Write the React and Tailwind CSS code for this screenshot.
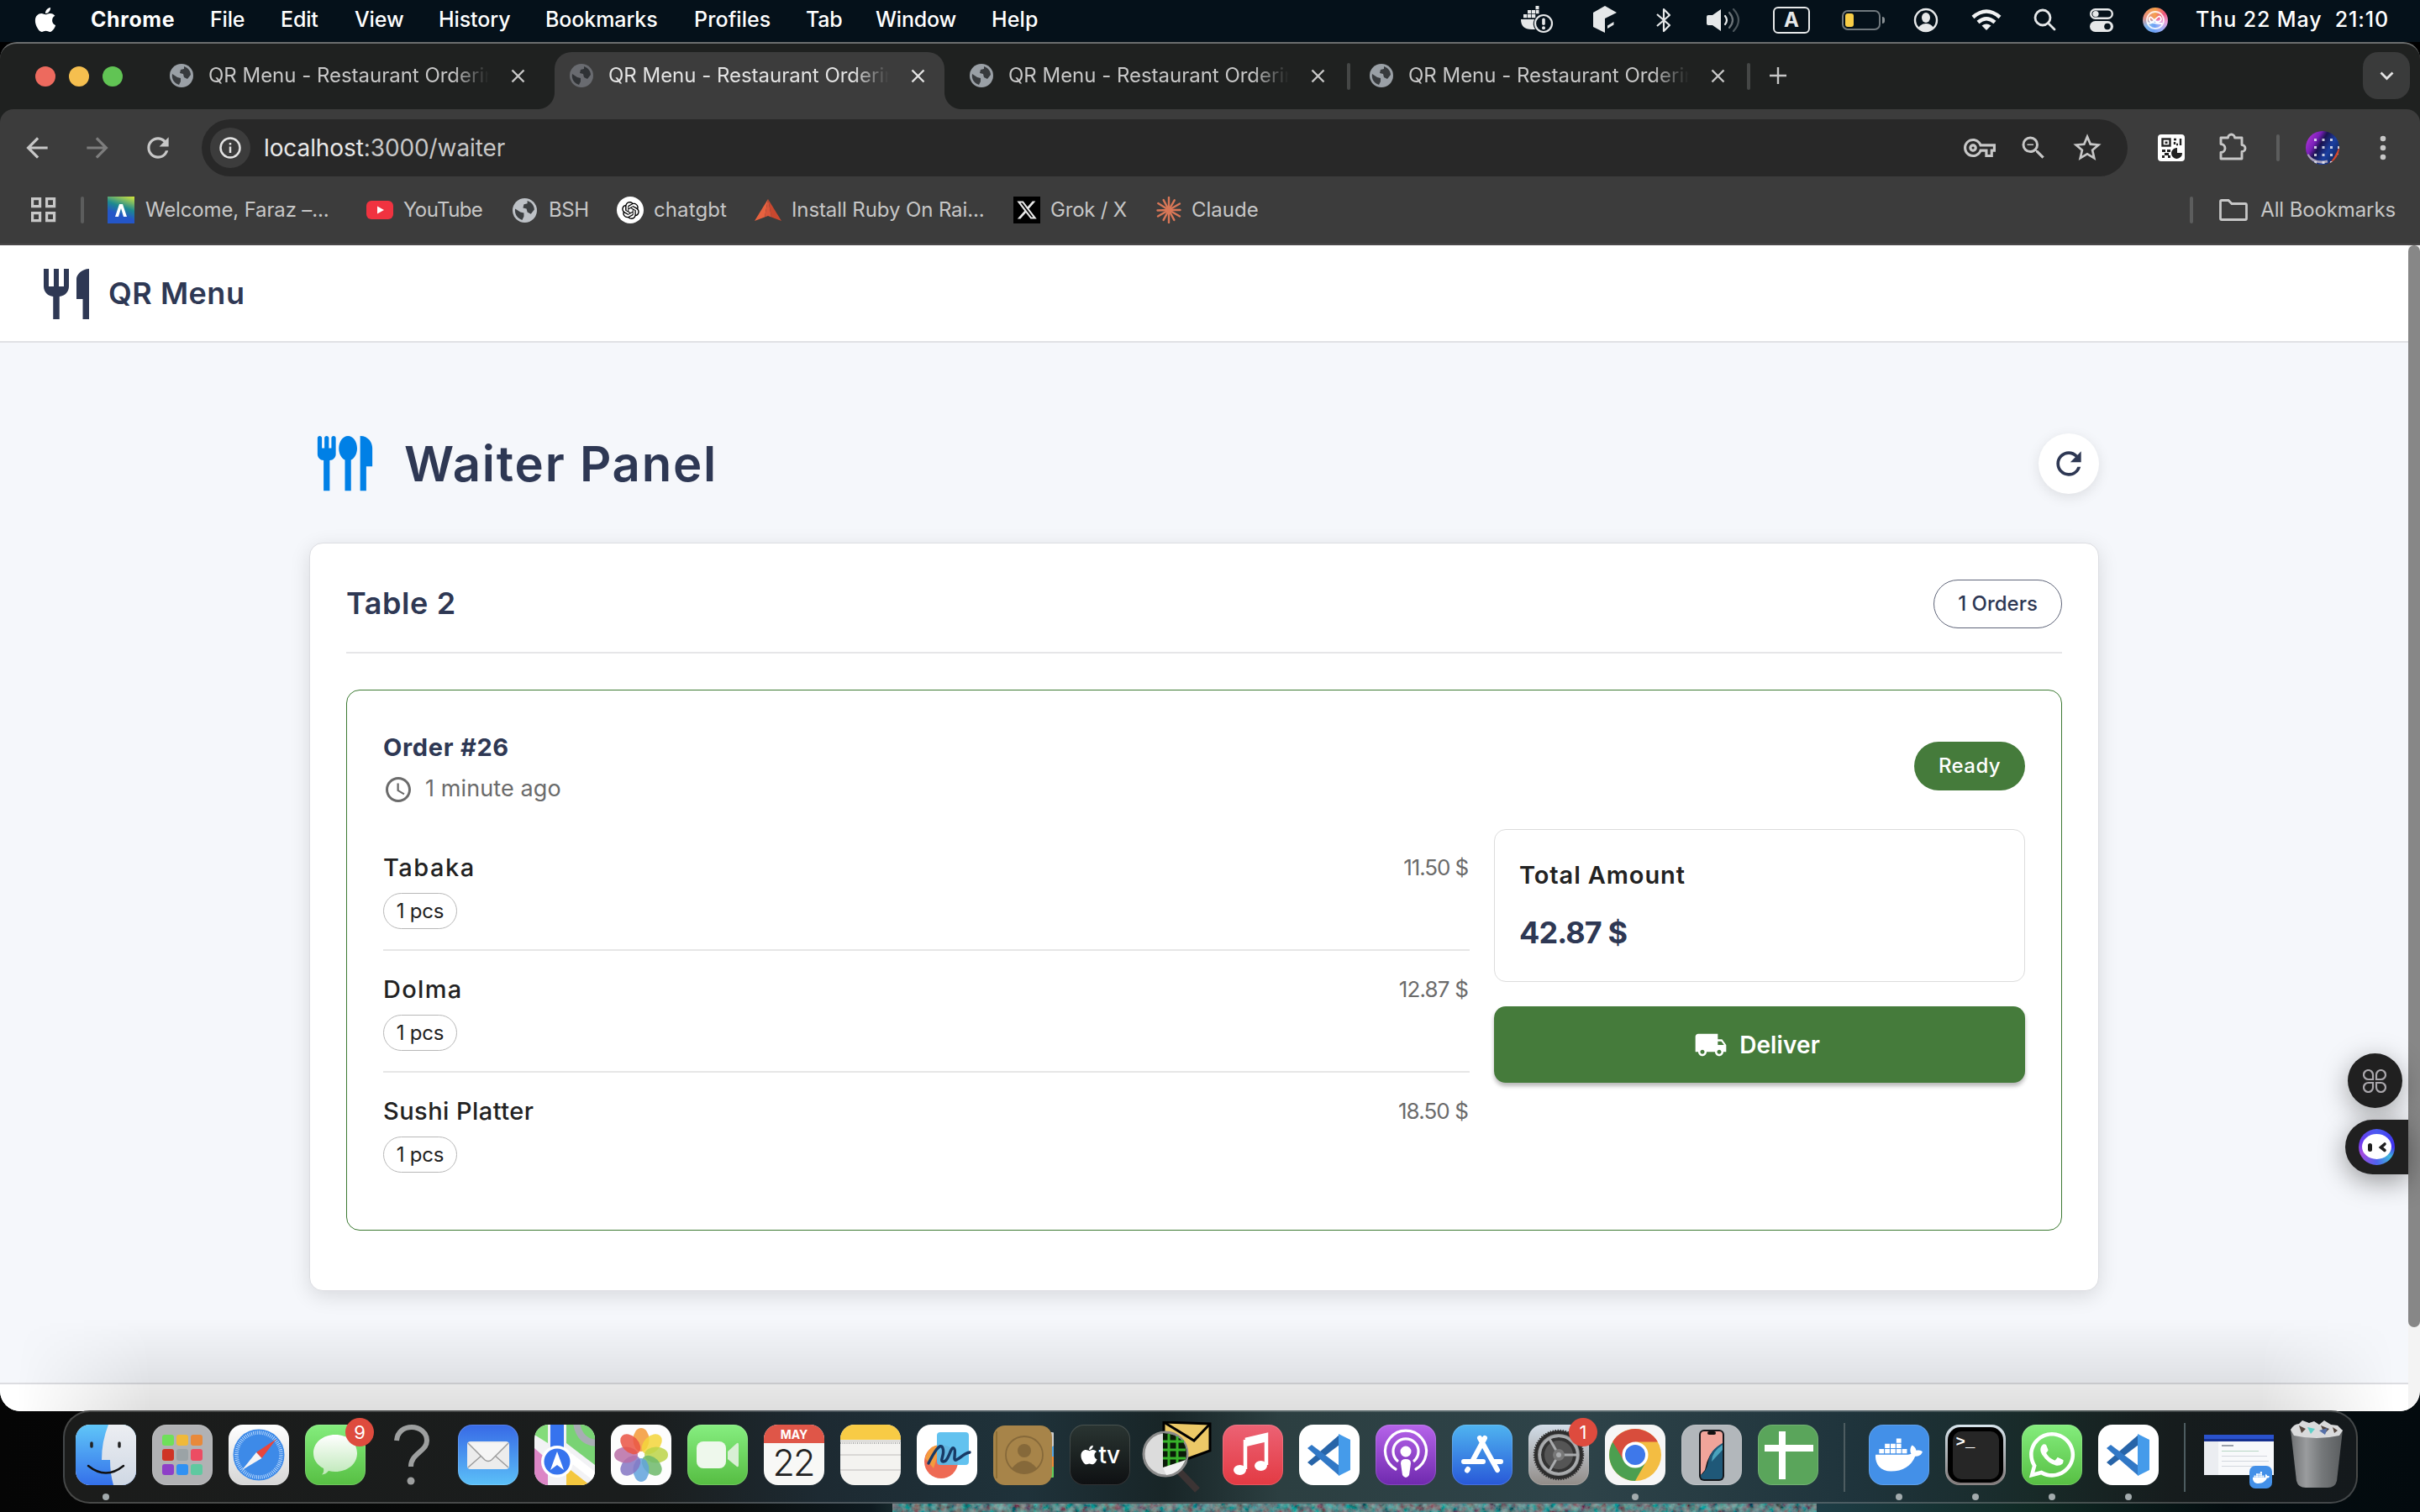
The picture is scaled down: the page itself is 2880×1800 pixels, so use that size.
import React from "react";
import { FaApple, FaDocker, FaWhatsapp } from "react-icons/fa";
import { FaXTwitter } from "react-icons/fa6";
import { RiOpenaiFill } from "react-icons/ri";
import {
  MdRestaurant, MdFlatware, MdRefresh, MdAccessTime, MdLocalShipping, MdArrowBack,
  MdArrowForward, MdStarBorder, MdOutlineVpnKey, MdZoomOut,
} from "react-icons/md";

/* ---------- macOS menu bar ---------- */

const MENUS = [
  ["Chrome", "w-[142px] font-bold tracking-[0.6px]"],
  ["File", "w-[84px] tracking-[-0.2px]"],
  ["Edit", "w-[88px] tracking-[-0.2px]"],
  ["View", "w-[100px] tracking-[-0.1px]"],
  ["History", "w-[127px] tracking-[-0.1px]"],
  ["Bookmarks", "w-[177px] tracking-[-0.1px]"],
  ["Profiles", "w-[133px] tracking-[0.1px]"],
  ["Tab", "w-[83px] tracking-[-0.2px]"],
  ["Window", "w-[138px] tracking-[-0.2px]"],
  ["Help", "w-[80px] tracking-[0.1px]"],
];

function DockerStatus() {
  return (
    <svg className="w-[40px] h-[34px]" viewBox="0 0 40 34" fill="#e6e8e9">
      <path d="M0 16h16a12 12 0 0 0 1 12H13C4 28 0 24 0 16zM3 10h4.300v4.300h-4.300zM8 10h4.300v4.300h-4.300zM13 10h4.300v4.300h-4.300zM8 5h4.300v4.300h-4.300zM13 5h4.300v4.300h-4.300zM18 5h3.500v4.300h-3.500zM17.500 0h4v4.300h-4z" />
      <circle cx="27" cy="21" r="10" fill="none" stroke="#e6e8e9" strokeWidth="2.200" />
      <rect x="25.200" y="14.500" width="3.600" height="8.500" rx="1.800" />
      <circle cx="27" cy="26.300" r="2" />
    </svg>
  );
}

function MenuBar() {
  return (
    <div className="h-[50px] bg-[#05111a] flex items-center pb-[3px] text-white text-[25px] font-medium">
      <FaApple className="w-[30px] h-[33px] ml-[39px] mr-[39px]" />
      {MENUS.map(([label, cls]) => (
        <div key={label} className={"whitespace-nowrap " + cls}>{label}</div>
      ))}
      <div className="ml-auto flex items-center w-[1070px]">
        <DockerStatus />
        <svg className="w-[28px] h-[33px] ml-[46px]" viewBox="0 0 28 33" fill="#e6e8e9">
          <path d="M0 8 14 0 28 8 14 15V32L0 25z" />
          <path d="M17 23.500 24.500 19v3.500L17 27z" />
        </svg>
        <svg className="w-[18px] h-[30px] ml-[47px]" viewBox="0 0 18 30" fill="none" stroke="#e6e8e9" strokeWidth="2.200" strokeLinejoin="round">
          <path d="M1 8 16 21 9 28V2L16 9 1 22" />
        </svg>
        <svg className="w-[40px] h-[28px] ml-[42px]" viewBox="0 0 40 28" fill="none" strokeWidth="2.200" strokeLinecap="round">
          <path d="M0 10q0-2 2-2h5L17 1V27L7 20H2q-2 0-2-2z" fill="#e6e8e9" />
          <path d="M22 9q4 5 0 10" stroke="#e6e8e9" />
          <path d="M27 5q8 9 0 18" stroke="#6d757a" />
          <path d="M32 1q12 13 0 26" stroke="#4b555b" />
        </svg>
        <div className="ml-[39px] w-[44px] h-[32px] rounded-[6px] border-2 border-[#e6e8e9] flex items-center justify-center font-bold text-[24px] text-[#e6e8e9] tracking-normal">A</div>
        <div className="ml-[38px] w-[46px] h-[24px] rounded-[7px] border-2 border-[#70787d] p-[2px]">
          <div className="w-[10px] h-full rounded-[3px] bg-[#f8cd46]" />
        </div>
        <div className="ml-[2px] w-[3px] h-[8px] rounded-r-full bg-[#8a9195]" />
        <svg className="w-[30px] h-[30px] ml-[34px]" viewBox="0 0 30 30">
          <circle cx="15" cy="15" r="13" fill="none" stroke="#e6e8e9" strokeWidth="2.400" />
          <ellipse cx="15" cy="12" rx="5" ry="6" fill="#e6e8e9" />
          <path d="M6 24q3-5 9-5t9 5q-9 8-18 0z" fill="#e6e8e9" />
        </svg>
        <svg className="w-[36px] h-[26px] ml-[39px]" viewBox="0 0 36 26" fill="none" stroke="#f0f1f2" strokeWidth="4.500">
          <path d="M2 9.500Q18-4.500 34 9.500" />
          <path d="M8 15.500Q18 7 28 15.500" />
          <path d="M18 25 12.500 19.500Q18 15.500 23.500 19.500z" fill="#f0f1f2" stroke="none" />
        </svg>
        <svg className="w-[27px] h-[27px] ml-[38px]" viewBox="0 0 27 27" fill="none" stroke="#e6e8e9" strokeWidth="2.800" strokeLinecap="round">
          <circle cx="11" cy="11" r="9" /><path d="M18 18 25 25" />
        </svg>
        <svg className="w-[28px] h-[28px] ml-[40px]" viewBox="0 0 28 28">
          <rect x="1.200" y="1.200" width="25.600" height="10.600" rx="5.300" fill="none" stroke="#e6e8e9" strokeWidth="2.400" />
          <circle cx="7" cy="6.500" r="3.600" fill="#e6e8e9" />
          <rect x="0" y="15" width="28" height="13" rx="6.500" fill="#e6e8e9" />
          <circle cx="21" cy="21.500" r="3.800" fill="#05111a" />
        </svg>
        <div className="ml-[35px] w-[30px] h-[30px] rounded-full bg-[conic-gradient(#f5a14a,#f0557f_15%,#e8a0d8_28%,#9fb0f8_40%,#6aa0f5_52%,#7fb6f0_65%,#e8907f_80%,#f5a14a)] flex items-center justify-center">
          <svg className="w-[24px] h-[24px]" viewBox="0 0 24 24" fill="none" stroke="#fff" strokeWidth="1.800">
            <circle cx="12" cy="12" r="10" opacity=".85" />
            <path d="M3 15C7 17 9 14 12 11S17 6 18.500 9 16 16 12 13 6 6 5 10 9 16 20 16" />
          </svg>
        </div>
        <div className="ml-[33px] whitespace-pre tracking-[0.9px] font-medium">Thu 22 May  21:10</div>
      </div>
    </div>
  );
}

/* ---------- Chrome ---------- */

function Globe({ className }) {
  return (
    <svg className={className} viewBox="0 0 28 28">
      <circle cx="14" cy="14" r="14" fill="currentColor" />
      <path d="M3 12l6 4 4 1v4l-2 4C5 23 2 18 3 12zM17 3c6 2 8 7 8 10l-4 5-4-2-1-4-4-1 1-4 4-1z" fill="#26282a" opacity=".85" />
    </svg>
  );
}

function CloseX() {
  return (
    <svg className="w-[17px] h-[17px] shrink-0" viewBox="0 0 17 17" stroke="currentColor" strokeWidth="2.400">
      <path d="M1.500 1.500 15.500 15.500M15.500 1.500 1.500 15.500" />
    </svg>
  );
}

function Tab({ active, divider }) {
  return (
    <div className={"relative w-[476px] h-[78px] flex items-center pl-[18px] " + (active ? "text-[#e3e3e3]" : "text-[#c7c7c7]")}>
      {active && (
        <div className="absolute left-0 top-[10px] w-[464px] h-[68px] rounded-t-[20px] bg-[#3c3c3c]">
          <div className="absolute left-[-20px] bottom-0 w-[20px] h-[20px] bg-[radial-gradient(circle_at_0_0,#1f2120_19.500px,#3c3c3c_20.500px)]" />
          <div className="absolute right-[-20px] bottom-0 w-[20px] h-[20px] bg-[radial-gradient(circle_at_100%_0,#1f2120_19.500px,#3c3c3c_20.500px)]" />
        </div>
      )}
      <Globe className={"relative w-[28px] h-[28px] shrink-0 mb-[2px] " + (active ? "text-[#696b70]" : "text-[#9aa0a6]")} />
      <div className="relative ml-[18px] mb-[2px] w-[334px] overflow-hidden whitespace-nowrap text-[24px] leading-[32px] tracking-[-0.02px] [mask-image:linear-gradient(to_right,#000_87%,transparent)]">
        QR Menu - Restaurant Ordering
      </div>
      <div className={"relative ml-[26px] mb-[2px] " + (active ? "text-[#e3e3e3]" : "text-[#c7c7c7]")}><CloseX /></div>
      {divider && <div className="ml-[26px] w-[4px] h-[32px] rounded-full bg-[#454746]" />}
    </div>
  );
}

function ClaudeMark() {
  return (
    <svg className="w-[32px] h-[32px]" viewBox="-16 -16 32 32" stroke="#d97757" strokeWidth="2.400" strokeLinecap="round">
      {[0, 30, 62, 90, 118, 150, 178, 212, 242, 270, 300, 330].map((a, i) => (
        <path key={a} d={i % 2 ? "M0 0H15" : "M0 0H13.500"} transform={`rotate(${a})`} />
      ))}
    </svg>
  );
}

const BOOKMARKS = [
  {
    label: "Welcome, Faraz –...", cls: "w-[308px]", txt: "tracking-[-0.15px]", gap: "ml-[13px]",
    icon: (
      <div className="w-[32px] h-[32px] bg-[linear-gradient(20deg,#2456c8_35%,#1d8a8f_60%,#d8e83a)] flex items-center justify-center">
        <svg className="w-[14px] h-[15px]" viewBox="0 0 14 15"><path d="M0 15 5 0H9L14 15H10L7 5 4 15z" fill="#fff" /></svg>
      </div>
    ),
  },
  {
    label: "YouTube", cls: "w-[174px]", txt: "tracking-[-0.6px]", gap: "ml-[12px]",
    icon: (
      <svg className="w-[32px] h-[22px]" viewBox="0 0 32 22"><rect width="32" height="22" rx="6" fill="#f03340" /><path d="M13 6.500 21 11 13 15.500z" fill="#fff" /></svg>
    ),
  },
  { label: "BSH", cls: "w-[124px]", txt: "tracking-[-0.4px]", gap: "ml-[14px]", icon: <Globe className="w-[29px] h-[29px] text-[#bdc1c6]" /> },
  {
    label: "chatgbt", cls: "w-[164px]", txt: "tracking-[0.1px]", gap: "ml-[12px]",
    icon: <div className="w-[32px] h-[32px] rounded-full bg-white flex items-center justify-center"><RiOpenaiFill className="w-[25px] h-[25px] text-black" /></div>,
  },
  {
    label: "Install Ruby On Rai...", cls: "w-[308px]", txt: "tracking-[-0.1px]", gap: "ml-[12px]",
    icon: (
      <svg className="w-[32px] h-[26px]" viewBox="0 0 32 26"><path d="M16 0 32 26 20 21.500 16 0z" fill="#c9482f" /><path d="M16 0 0 26 12 21.500z" fill="#e8623f" /><path d="M16 0 12 21.500 16 20 20 21.500z" fill="#d9553a" /></svg>
    ),
  },
  {
    label: "Grok / X", cls: "w-[169px]", txt: "tracking-[-0.2px]", gap: "ml-[12px]",
    icon: <div className="w-[32px] h-[32px] bg-black flex items-center justify-center"><FaXTwitter className="w-[26px] h-[26px] text-[#e8e8e8]" /></div>,
  },
  { label: "Claude", cls: "w-[140px]", txt: "", gap: "ml-[11px]", icon: <ClaudeMark /> },
];

function QrExtension() {
  return (
    <svg className="w-[32px] h-[32px]" viewBox="0 0 32 32">
      <rect width="32" height="32" rx="4" fill="#fff" />
      <g fill="none" stroke="#222" strokeWidth="2.400"><rect x="5.500" y="5.500" width="9" height="8" /><path d="M19 6h3M20 12v-3M27 5v8M24 12h-2" /></g>
      <path d="M8.500 8.500h3v2.500h-3zM5 18h4v3h-4zM11 18h4v3h-4zM8 22h5v3h-5zM5 25h3v3h-3zM12 25h3v3h-3z" fill="#222" />
      <path d="M23 16v6h6a6.500 6.500 0 1 1-6-6z" fill="#222" />
    </svg>
  );
}

function ChromeHeader() {
  return (
    <>
      <div className="h-[78px] flex items-center pl-[42px] pr-[12px]">
        <div className="flex gap-[16px] w-[142px]">
          <div className="w-[24px] h-[24px] rounded-full bg-[#ed6a5e]" />
          <div className="w-[24px] h-[24px] rounded-full bg-[#f5bf4f]" />
          <div className="w-[24px] h-[24px] rounded-full bg-[#61c454]" />
        </div>
        <Tab />
        <Tab active />
        <Tab divider />
        <Tab divider />
        <svg className="w-[20px] h-[20px] ml-[18px] mb-[2px]" viewBox="0 0 20 20" stroke="#c7c7c7" strokeWidth="2.400"><path d="M10 0V20M0 10H20" /></svg>
        <div className="ml-auto mb-[2px] w-[56px] h-[56px] rounded-[18px] bg-[#3a3b3b] flex items-center justify-center">
          <svg className="w-[17px] h-[11px]" viewBox="0 0 17 11" fill="none" stroke="#e3e3e3" strokeWidth="2.800"><path d="M1.500 1.500 8.500 8.500 15.500 1.500" /></svg>
        </div>
      </div>
      <div className="h-[162px] bg-[#3c3c3c] rounded-t-[16px] border-b-2 border-[#4a4849]">
        <div className="h-[92px] pt-[12px] flex items-start">
          <div className="h-[68px] flex items-center w-[240px] text-[#c7c7c7]">
            <MdArrowBack className="w-[38px] h-[38px] ml-[25px]" />
            <MdArrowForward className="w-[38px] h-[38px] ml-[34px] text-[#7d7d7d]" />
            <MdRefresh className="w-[38px] h-[38px] ml-[34px]" />
          </div>
          <div className="w-[2292px] h-[68px] rounded-full bg-[#282828] flex items-center pl-[10px] text-[#c7c7c7]">
            <div className="w-[48px] h-[48px] rounded-full bg-[#3c3c3c] flex items-center justify-center">
              <svg className="w-[26px] h-[26px]" viewBox="0 0 26 26" fill="none" stroke="#e3e3e3" strokeWidth="2.500"><circle cx="13" cy="13" r="11.500" /><path d="M13 11.500V19M13 7V9.500" /></svg>
            </div>
            <div className="ml-[16px] text-[28px] leading-[36px] tracking-[-0.1px] text-[#c7c7c7]"><span className="text-[#e8e8e8]">localhost</span>:3000/waiter</div>
            <MdOutlineVpnKey className="w-[38px] h-[38px] ml-auto" />
            <MdZoomOut className="w-[36px] h-[36px] ml-[27px]" />
            <MdStarBorder className="w-[40px] h-[40px] ml-[26px] mr-[28px]" />
          </div>
          <div className="h-[68px] flex items-center flex-1 pl-[36px] text-[#c7c7c7]">
            <QrExtension />
            <svg className="w-[34px] h-[34px] ml-[41px] mb-[4px]" viewBox="0 0 34 34" fill="none" stroke="#c7c7c7" strokeWidth="2.900" strokeLinejoin="round">
              <path d="M2 7H10.500A4 4 0 0 1 18.500 7H27V15.500A4 4 0 0 1 27 23.500V32H2V24.500A5 5 0 0 0 2 14.500z" />
            </svg>
            <div className="ml-[34px] w-[4px] h-[32px] rounded-full bg-[#5c5d5d]" />
            <svg className="ml-[31px] w-[40px] h-[40px]" viewBox="0 0 40 40">
              <defs>
                <linearGradient id="av" x1="0" y1="0" x2="1" y2=".6"><stop offset="0" stopColor="#c23be0" /><stop offset=".35" stopColor="#7a1fb8" /><stop offset=".5" stopColor="#1a1350" /><stop offset=".75" stopColor="#1b3fa0" /><stop offset="1" stopColor="#132a66" /></linearGradient>
                <clipPath id="avc"><circle cx="20" cy="20" r="20" /></clipPath>
              </defs>
              <g clipPath="url(#avc)">
                <rect width="40" height="40" fill="url(#av)" />
                <path d="M26 40Q34 34 40 18V40z" fill="#d4472a" />
                <path d="M2 28Q10 40 26 36" stroke="#a8a0b8" strokeWidth="3" fill="none" />
                {[9, 18, 27, 36].map((y) => [10, 19.5, 29, 38].map((x) => <rect key={x + "-" + y} x={x} y={y} width="3" height="3" fill="#e6e9f2" opacity=".85" />))}
              </g>
            </svg>
            <svg className="ml-[48px] w-[8px] h-[30px]" viewBox="0 0 8 30" fill="#c7c7c7"><circle cx="4" cy="4" r="3.300" /><circle cx="4" cy="15" r="3.300" /><circle cx="4" cy="26" r="3.300" /></svg>
          </div>
        </div>
        <div className="h-[56px] flex items-center text-[#c7c7c7] text-[24px] pl-[37px]">
          <svg className="w-[30px] h-[30px]" viewBox="0 0 30 30" fill="none" stroke="#c7c7c7" strokeWidth="3.200"><path d="M1.600 1.600h9v9h-9zM18.600 1.600h9v9h-9zM1.600 18.600h9v9h-9zM18.600 18.600h9v9h-9z" /></svg>
          <div className="ml-[29px] mr-[28px] w-[4px] h-[32px] rounded-full bg-[#5c5d5d]" />
          {BOOKMARKS.map((b) => (
            <div key={b.label} className={"flex items-center shrink-0 whitespace-nowrap " + b.cls}>
              {b.icon}
              <span className={b.gap + " " + b.txt}>{b.label}</span>
            </div>
          ))}
          <div className="ml-auto w-[4px] h-[32px] rounded-full bg-[#5c5d5d]" />
          <svg className="w-[34px] h-[26px] ml-[31px]" viewBox="0 0 34 26" fill="none" stroke="#c7c7c7" strokeWidth="2.800"><path d="M1.500 3q0-1.500 1.500-1.500H11l4 4H31q1.500 0 1.500 1.500V23q0 1.500-1.500 1.500H3Q1.500 24.500 1.500 23z" /></svg>
          <span className="ml-[15px] mr-[29px] tracking-[-0.12px] whitespace-nowrap">All Bookmarks</span>
        </div>
      </div>
    </>
  );
}

/* ---------- Waiter page ---------- */

const ITEMS = [
  { name: "Tabaka", price: "11.50 $", last: false, cls: "tracking-[1.500px]", priceCls: "tracking-[-1.100px]" },
  { name: "Dolma", price: "12.87 $", last: false, cls: "tracking-[1.300px]", priceCls: "tracking-[-0.850px]" },
  { name: "Sushi Platter", price: "18.50 $", last: true, cls: "tracking-[0.450px]", priceCls: "tracking-[-0.900px]" },
];

function OrderItem({ item }) {
  return (
    <div className={"h-[145px] pt-[28px] flex justify-between items-start " + (item.last ? "" : "border-b-2 border-[#e6e6e6]")}>
      <div>
        <div className={"h-[36px] leading-[36px] text-[29px] font-medium text-[#222] " + item.cls}>{item.name}</div>
        <div className="mt-[12px] w-[88px] h-[43px] rounded-full border border-[#b8b8b8] flex items-center justify-center text-[24px] text-[#222] tracking-[-0.2px]">1 pcs</div>
      </div>
      <div className={"mt-[1px] mr-[2px] h-[34px] leading-[34px] text-[26px] text-[#6b6b6b] " + item.priceCls}>{item.price}</div>
    </div>
  );
}

function OrderCard() {
  return (
    <div className="h-[644px] rounded-[16px] border border-[#3c7a32] pt-[40px] px-[43px]">
      <div className="h-[100px] flex items-center justify-between">
        <div>
          <div className="h-[56px] leading-[56px] text-[29px] font-bold text-[#2e3854] tracking-[0.7px]">Order #26</div>
          <div className="h-[44px] flex items-center text-[#6b6b6b]">
            <MdAccessTime className="w-[36px] h-[36px]" />
            <span className="ml-[14px] mb-[2px] text-[27px] tracking-[0.1px]">1 minute ago</span>
          </div>
        </div>
        <div className="w-[132px] h-[58px] rounded-full bg-[#457b3b] text-white text-[24px] font-medium flex items-center justify-center tracking-[0.4px]">Ready</div>
      </div>
      <div className="mt-[25px] flex gap-[29px]">
        <div className="flex-1">{ITEMS.map((i) => <OrderItem key={i.name} item={i} />)}</div>
        <div className="w-[632px]">
          <div className="h-[182px] rounded-[14px] border border-[#dcdcdc] pt-[32px] pl-[29px]">
            <div className="h-[44px] leading-[44px] text-[29px] font-semibold text-[#222] tracking-[0.9px]">Total Amount</div>
            <div className="mt-[21px] h-[50px] leading-[50px] text-[36px] font-bold text-[#2e3854] tracking-[-0.9px]">42.87 $</div>
          </div>
          <div className="mt-[29px] h-[91px] rounded-[14px] bg-[#457b3b] shadow-[0_4px_5px_rgba(0,0,0,0.28)] flex items-center justify-center text-white pr-[6px]">
            <MdLocalShipping className="w-[40px] h-[40px]" />
            <span className="ml-[14px] text-[28px] font-semibold tracking-[0.1px]">Deliver</span>
          </div>
        </div>
      </div>
    </div>
  );
}

function FloatingTools() {
  return (
    <div className="absolute right-0 top-[962px] w-[75px]">
      <div className="ml-[3px] w-[65px] h-[65px] rounded-full bg-[#202020] shadow-[0_8px_32px_rgba(0,0,0,0.35)] flex items-center justify-center">
        <svg className="w-[28px] h-[28px] mr-[1px]" viewBox="0 0 28 28" fill="none" stroke="#a9a6ab" strokeWidth="2.200">
          <path d="M12 12H6.500A5.500 5.500 0 1 1 12 6.500zM16 12V6.500A5.500 5.500 0 1 1 21.500 12zM12 16V21.500A5.500 5.500 0 1 1 6.500 16zM16 16H21.500A5.500 5.500 0 1 1 16 21.500z" />
        </svg>
      </div>
      <div className="mt-[14px] h-[65px] rounded-l-full bg-[#202020] shadow-[0_8px_32px_rgba(0,0,0,0.4)] flex items-center pl-[16px]">
        <div className="w-[43px] h-[43px] rounded-full bg-[conic-gradient(#4a5af0,#4030f0_25%,#3fb8dc_35%,#4f63ee_50%,#a34be0_68%,#6a3af0_80%,#4a5af0)] flex items-center justify-center">
          <svg className="w-[35px] h-[31px]" viewBox="0 0 35 31">
            <ellipse cx="17.500" cy="15" rx="17.500" ry="15" fill="#fff" />
            <rect x="7" y="11" width="5" height="10" rx="2.500" fill="#202020" />
            <path d="M27 12 22.500 16 27 19.500" fill="none" stroke="#202020" strokeWidth="3.600" strokeLinecap="round" />
          </svg>
        </div>
      </div>
    </div>
  );
}

function WaiterPage() {
  return (
    <div className="h-[1388px] flex rounded-b-[24px] overflow-hidden bg-white">
      <div className="relative w-[2866px] bg-[#f5f7fb]">
        <div className="h-[116px] bg-white border-b-2 border-[#e0e1e5] flex items-center pl-[43px] pt-[2px] text-[#2e3854]">
          <MdRestaurant className="w-[72px] h-[72px]" />
          <span className="ml-[14px] mb-[2px] text-[36px] font-semibold tracking-[0.5px]">QR Menu</span>
        </div>
        <div className="w-[2130px] mx-auto pt-[108px]">
          <div className="h-[72px] flex items-center text-[#2e3854]">
            <MdFlatware className="w-[87px] h-[87px] ml-[-1px] mb-[2px] text-[#0080e6]" />
            <span className="ml-[27px] text-[58px] font-semibold tracking-[1.800px]">Waiter Panel</span>
            <div className="ml-auto w-[72px] h-[72px] rounded-full bg-white shadow-[0_4px_16px_rgba(0,0,0,0.1)] flex items-center justify-center">
              <MdRefresh className="w-[44px] h-[44px]" />
            </div>
          </div>
          <div className="mt-[58px] h-[891px] rounded-[16px] bg-white border border-[#dcdde2] shadow-[0_6px_24px_rgba(0,0,0,0.12)] px-[43px] pt-[43px]">
            <div className="h-[88px] border-b-2 border-[#e6e6e8] flex items-start justify-between text-[#2e3854]">
              <div className="h-[56px] leading-[56px] text-[36px] font-semibold tracking-[0.6px]">Table 2</div>
              <div className="w-[153px] h-[58px] rounded-full border border-[#5f6579] text-[24px] font-medium flex items-center justify-center">1 Orders</div>
            </div>
            <div className="mt-[43px]"><OrderCard /></div>
          </div>
        </div>
        <div className="mt-[109px] h-[34px] border-t-2 border-[#dcdde1] bg-white" />
        <div className="absolute inset-x-0 bottom-0 h-[110px] bg-[linear-gradient(to_bottom,transparent,rgba(0,0,0,0.13))] [mask-image:linear-gradient(to_right,transparent_20px,#000_180px,#000_2690px,transparent_2850px)]" />
        <FloatingTools />
      </div>
      <div className="w-[14px] bg-[#f3f3f3]">
        <div className="h-[1288px] rounded-[7px] bg-[#878787]" />
      </div>
    </div>
  );
}

/* ---------- Dock ---------- */

function Tile({ children, className = "", dot, badge }) {
  return (
    <div className="relative w-[72px] h-[72px] shrink-0">
      <div className={"w-full h-full rounded-[17px] overflow-hidden flex items-center justify-center shadow-[inset_0_0_0_1px_rgba(255,255,255,0.15)] " + className}>{children}</div>
      {badge && <div className="absolute right-[-10px] top-[-8px] w-[34px] h-[34px] rounded-full bg-[#de4b3e] text-white text-[22px] flex items-center justify-center">{badge}</div>}
      {dot && <div className="absolute left-[32px] top-[82px] w-[8px] h-[8px] rounded-full bg-[#a3abad]" />}
    </div>
  );
}

function Art({ children }) {
  return <svg className="w-full h-full" viewBox="0 0 72 72">{children}</svg>;
}

function VsCode() {
  return (
    <Art>
      <path d="M10 45 48 12V24L15 49z" fill="#2764a8" />
      <path d="M10 28 15 24 48 49V61z" fill="#3178c6" />
      <path d="M47 11 61 18V54L47 61z" fill="#459bea" />
    </Art>
  );
}

const LAUNCH = [
  "bg-[#6fe05a]", "bg-[#f0b93a]", "bg-[#e8893a]",
  "bg-[#cf3426]", "bg-[#9ba3a6]", "bg-[#ec4d63]",
  "bg-[#8e3fc8]", "bg-[#3191f2]", "bg-[#5fc9a0]",
];

const PETALS = ["#f39a38", "#f3d53b", "#bcd448", "#6fb96b", "#62a3dc", "#8577c4", "#b96fa6", "#ea5545"];

function Dock() {
  return (
    <div className="h-[111px] w-[2731px] ml-[75px] mt-[-1px] rounded-[32px] border-2 border-[#ffffff33] bg-[linear-gradient(to_right,#1b1c1b_0%,#1a1d1d_25%,#1d2a32_33%,#1f323a_42%,#182527_48%,#2c3f41_53%,#2e4349_66%,#1f343c_78%,#182a28_86%,#161c1d_92%,#14191c_100%)] relative">
      <div className="flex pl-[13px] pt-[15px] gap-[19px]">
        <Tile dot className="bg-white">
          <Art>
            <defs>
              <linearGradient id="fa" x1="0" y1="0" x2="0" y2="1"><stop stopColor="#60c6f8" /><stop offset="1" stopColor="#3470ea" /></linearGradient>
              <linearGradient id="fb" x1="0" y1="0" x2="0" y2="1"><stop stopColor="#eceef2" /><stop offset="1" stopColor="#cfd8e4" /></linearGradient>
            </defs>
            <rect width="72" height="72" fill="url(#fa)" />
            <path d="M39 0Q31 20 31 42H41Q41 58 45 72H72V0z" fill="url(#fb)" />
            <path d="M19 22v4M52 22v4" stroke="#222" strokeWidth="3.500" strokeLinecap="round" />
            <path d="M15 49Q36 66 57 49" stroke="#111" strokeWidth="2.500" fill="none" strokeLinecap="round" />
          </Art>
        </Tile>
        <Tile className="bg-[#b1b2b4]">
          <div className="grid grid-cols-3 gap-x-[3.500px] gap-y-[4px]">
            {LAUNCH.map((c) => <div key={c} className={"w-[13.500px] h-[13.500px] rounded-[3px] " + c} />)}
          </div>
        </Tile>
        <Tile className="bg-[linear-gradient(#fff,#d6d6d6)]">
          <Art>
            <circle cx="36" cy="36" r="30.500" fill="#3d8ae8" />
            <circle cx="36" cy="36" r="26.500" fill="none" stroke="#cfe6ff" strokeWidth="4.500" strokeDasharray="0.800 1.500" />
            <path d="M57 17 39.500 40 33 33z" fill="#e8463c" /><path d="M16 54 33 33 39.500 40z" fill="#f4f4f6" />
          </Art>
        </Tile>
        <Tile badge="9" className="bg-[linear-gradient(#84ed7d,#57bf43)]">
          <Art>
            <defs><linearGradient id="ms" x1="0" y1="0" x2="0" y2="1"><stop stopColor="#fff" /><stop offset="1" stopColor="#bfe8b9" /></linearGradient></defs>
            <path d="M36 12c15 0 26 9.500 26 22s-11 22-26 22q-4 0-8-1-3 4-8 4.500 3-3 2-7.500C14 48 10 41.500 10 34c0-12.500 11-22 26-22z" fill="url(#ms)" />
          </Art>
        </Tile>
        <div className="w-[72px] h-[72px] shrink-0">
          <Art>
            <path d="M18 19C19 8 27 3 36 3s18 6 18 16c0 13-19 15-19 31" fill="none" stroke="#9d9f9f" strokeWidth="6" />
            <circle cx="35" cy="67" r="4.500" fill="#9d9f9f" />
          </Art>
        </div>
        <Tile className="bg-[linear-gradient(#3769e6,#5bc0f8)]">
          <Art>
            <rect x="11" y="20" width="50" height="33" rx="4" fill="#ececec" />
            <path d="M12 51 29 36M60 51 43 36" stroke="#9c9c9c" strokeWidth="1.500" />
            <path d="M12 22 32 42q4 3 8 0L60 22" fill="#f5f5f5" stroke="#9c9c9c" strokeWidth="1.500" />
          </Art>
        </Tile>
        <Tile className="bg-[#f2f2f5]">
          <Art>
            <path d="M38 0H72V48L38 22z" fill="#79d374" /><path d="M0 0H16V22L0 12z" fill="#84dc7a" />
            <path d="M0 28 16 42V72H0z" fill="#dc86c6" /><path d="M38 50 66 72H38z" fill="#f4c73f" /><path d="M44 46 72 68V56L44 34z" fill="#fff" />
            <path d="M50-2Q54 22 76 22" fill="none" stroke="#a8adb4" strokeWidth="8" />
            <rect x="19" width="16" height="40" fill="#3673ee" />
            <circle cx="27" cy="44" r="19" fill="#fff" /><circle cx="27" cy="44" r="15.500" fill="#3673ee" />
            <path d="M27 32 35 54 27 48 19 54z" fill="#fff" />
          </Art>
        </Tile>
        <Tile className="bg-[#fdfdfd]">
          <Art>
            {PETALS.map((c, i) => (
              <ellipse key={c} cx="36" cy="18" rx="9.500" ry="14" fill={c} opacity=".86" transform={`rotate(${i * 45} 36 36)`} />
            ))}
          </Art>
        </Tile>
        <Tile className="bg-[linear-gradient(#86ee80,#56bd42)]">
          <Art>
            <rect x="11" y="20" width="35" height="32" rx="8" fill="#eef8ec" /><path d="M48 32 59 22q2-1 2 2V48q0 3-2 2L48 41z" fill="#d8efd4" />
          </Art>
        </Tile>
        <Tile className="bg-[#f8f8f6]">
          <Art>
            <rect width="72" height="22" fill="#df5648" />
            <text x="36" y="17" textAnchor="middle" fontSize="14" fontWeight="700" fill="#fff" fontFamily="Inter">MAY</text>
            <text x="35" y="61" textAnchor="middle" fontSize="43" fontWeight="300" fill="#222" fontFamily="Inter" letterSpacing="-2">22</text>
          </Art>
        </Tile>
        <Tile className="bg-[#f4f3f0]">
          <Art>
            <rect width="72" height="18" fill="#f8cb45" /><path d="M0 19.500H72M0 36H72M0 54H72" stroke="#cfcecb" strokeWidth="1.500" /><path d="M0 22H72" stroke="#aaa" strokeWidth="2" strokeDasharray="1 1.500" />
          </Art>
        </Tile>
        <Tile className="bg-white">
          <Art>
            <circle cx="29" cy="44" r="20" fill="#ee6a54" /><path d="M10 40Q14 24 29 24L20 52z" fill="#f49b3e" />
            <rect x="24" y="9" width="38" height="39" rx="4" fill="#55bdee" opacity=".92" />
            <path d="M14 46C20 34 28 20 31 28S26 44 32 44 40 26 44 28 42 44 47 42 56 34 63 33" fill="none" stroke="#183a66" strokeWidth="3.400" strokeLinecap="round" />
          </Art>
        </Tile>
        <div className="relative w-[72px] h-[72px] shrink-0">
          <Art>
            <rect x="60" y="9" width="13" height="17" rx="3" fill="#cfcfcf" /><rect x="60" y="26" width="13" height="13" fill="#55a7e8" /><rect x="60" y="38" width="13" height="13" fill="#ee8c38" /><rect x="60" y="50" width="13" height="13" rx="3" fill="#62cf5c" />
            <rect x="0" y="1" width="70" height="71" rx="14" fill="#a78449" /><path d="M4 8V64" stroke="#86682f" strokeWidth="1.500" />
            <circle cx="37" cy="36" r="22" fill="none" stroke="#86693a" strokeWidth="1.800" /><circle cx="37" cy="31" r="8" fill="#86693a" /><path d="M22 52Q37 34 52 52 37 64 22 52z" fill="#86693a" />
          </Art>
        </div>
        <Tile className="bg-[linear-gradient(#2a3532,#0e1012)] text-white">
          <FaApple className="w-[22px] h-[26px]" />
          <span className="text-[28px] font-medium leading-none tracking-[-0.5px]">tv</span>
        </Tile>
        <div className="w-[72px] h-[72px] shrink-0">
          <svg className="w-[86px] h-[86px] ml-[-6px] mt-[-4px]" viewBox="0 0 86 86">
            <path d="M27 1 82 3V35L27 55z" fill="#ecc967" stroke="#000" strokeWidth="3" /><path d="M27 1 63 23 82 3" fill="none" stroke="#000" strokeWidth="3" />
            <path d="M44 58 67 82" stroke="#3c3434" strokeWidth="8" />
            <circle cx="29" cy="39" r="26" fill="#dcdcdc" stroke="#8b8b8b" strokeWidth="3" />
            <path d="M26 14Q54 16 54 39 54 48 48 54L26 55z" fill="#0a1c08" />
            <path d="M26 24H51M26 34H53M26 44H53M33 15V54M43 18V54" stroke="#37b32a" strokeWidth="3" />
            <path d="M26 55 53 46Q46 62 30 64z" fill="#f2f2f2" />
          </svg>
        </div>
        <Tile className="bg-[linear-gradient(#ec6274,#e33a43)]">
          <Art>
            <path d="M27 18 52 12V48M27 18V53M27 24 52 18" fill="none" stroke="#fff" strokeWidth="4.500" />
            <path d="M27 16 53 11V19L27 25z" fill="#fff" />
            <ellipse cx="20.500" cy="54" rx="7.500" ry="6" fill="#fff" /><ellipse cx="45.500" cy="49" rx="7.500" ry="6" fill="#fff" />
          </Art>
        </Tile>
        <Tile className="bg-white"><VsCode /></Tile>
        <Tile className="bg-[linear-gradient(#b664ea,#6f29ae)]">
          <Art>
            <g fill="none" stroke="#fff" strokeWidth="3.200" strokeLinecap="round"><path d="M24 53A24.500 24.500 0 1 1 48 53" /><path d="M26 43A15 15 0 1 1 46 43" /></g>
            <circle cx="36" cy="32" r="6.500" fill="#fff" /><path d="M30 46q0-5 6-5t6 5l-2 14q-4 6-8 0z" fill="#fff" />
          </Art>
        </Tile>
        <Tile className="bg-[linear-gradient(#4fb4f0,#2858d8)]">
          <Art>
            <g stroke="#fff" strokeWidth="6" strokeLinecap="round"><path d="M39 16 25 42M19 53 18 54.500M33 16 54 54M14 44H37M49 44H58" /></g>
          </Art>
        </Tile>
        <Tile badge="1" className="bg-[linear-gradient(#d2dde8,#918c88)]">
          <Art>
            <circle cx="36" cy="36" r="27" fill="#8a8c8e" stroke="#2d2d2d" strokeWidth="4" />
            <circle cx="36" cy="36" r="29" fill="none" stroke="#333" strokeWidth="2.500" strokeDasharray="1.500 1.500" />
            <circle cx="36" cy="36" r="19" fill="#555" stroke="#333" strokeWidth="4" /><circle cx="36" cy="36" r="22.500" fill="none" stroke="#a9abad" strokeWidth="3" />
            <path d="M36 36H58M36 36 25 17M36 36 25 55" stroke="#a9abad" strokeWidth="3" /><circle cx="36" cy="36" r="7" fill="#777" /><circle cx="36" cy="36" r="3" fill="#a9abad" />
          </Art>
        </Tile>
        <Tile dot className="bg-[#f6f6f6]">
          <Art>
            <circle cx="36" cy="36" r="31" fill="#f3bd42" />
            <path d="M36 36 9 21A31 31 0 0 0 36 67L49 44z" fill="#4c9f50" />
            <path d="M9.200 20.500A31 31 0 0 1 62.800 20.500H36L22.500 43z" fill="#d84d3c" />
            <circle cx="36" cy="36" r="15.500" fill="#fff" /><circle cx="36" cy="36" r="12" fill="#3e78ea" />
          </Art>
        </Tile>
        <Tile className="bg-[#b2b7bb]">
          <Art>
            <rect x="21" y="6" width="30" height="61" rx="6" fill="#15181c" />
            <path d="M23 12q0-4 4-4H45q4 0 4 4V24Q32 30 28 54L23 60z" fill="#f0a49a" />
            <path d="M49 22Q34 30 32 44 30 56 23 60V61q0 4 4 4H45q4 0 4-4z" fill="#1f5878" /><path d="M49 24Q36 32 36 44L49 30z" fill="#4aa3bd" />
            <rect x="31" y="8" width="10" height="4" rx="2" fill="#111" />
          </Art>
        </Tile>
        <Tile className="bg-[#5aa55b]">
          <Art><path d="M25 8H33V24H66V32H33V65H25V32H8V24H25z" fill="#fff" /></Art>
        </Tile>
        <div className="w-[2px] h-[82px] ml-[11px] mr-[9px] mt-[-2px] bg-[#4d5c60] shrink-0" />
        <Tile dot className="bg-[#4390e8]"><FaDocker className="w-[56px] h-[56px] text-white" /></Tile>
        <Tile dot className="bg-[linear-gradient(#d6e4ec,#7d7676)]">
          <div className="w-[66px] h-[66px] rounded-[15px] bg-black flex items-center justify-center">
            <div className="w-[55px] h-[57px] rounded-[10px] bg-[#262626] pl-[4px] pt-[5px] text-white text-[19px] font-bold leading-[17px] [font-family:'Liberation_Mono',monospace]">&gt;_</div>
          </div>
        </Tile>
        <Tile dot className="bg-[linear-gradient(#84ed7d,#57bf43)]"><FaWhatsapp className="w-[62px] h-[62px] text-white" /></Tile>
        <Tile dot className="bg-white"><VsCode /></Tile>
        <div className="w-[2px] h-[82px] ml-[11px] mr-[3px] mt-[-2px] bg-[#4d5c60] shrink-0" />
        <div className="relative w-[83px] h-[48px] mt-[12px] bg-[#f8f9fb] shrink-0 flex flex-col">
          <div className="h-[5px] bg-[#2a52cc]" />
          <div className="h-[3px] bg-[#16308f]" />
          <div className="flex flex-1">
            <div className="w-[17px] bg-[#ebedf1]" />
            <div className="flex-1 pl-[4px] pt-[4px] flex flex-col gap-[5px]">
              <div className="w-[14px] h-[2px] bg-[#9aa0aa]" />
              <div className="w-[44px] h-px bg-[#b9d6c4]" />
              <div className="w-[54px] h-px bg-[#d3d7de]" />
              <div className="w-[56px] h-px bg-[#d3d7de]" />
              <div className="w-[52px] h-px bg-[#d3d7de]" />
            </div>
          </div>
          <div className="absolute left-[54px] top-[37px] w-[27px] h-[27px] rounded-[7px] bg-[#4390e8] flex items-center justify-center"><FaDocker className="w-[20px] h-[20px] text-white" /></div>
        </div>
        <svg className="w-[66px] h-[84px] mt-[-7px] ml-[-1px] shrink-0" viewBox="0 0 66 84">
          <defs><linearGradient id="tr"><stop stopColor="#6d7072" /><stop offset=".3" stopColor="#9a9c9e" /><stop offset=".6" stopColor="#75787a" /><stop offset="1" stopColor="#5a5d5f" /></linearGradient></defs>
          <path d="M2 13 64 13 57 74Q55 82 46 82H20Q11 82 9 74z" fill="url(#tr)" />
          <path d="M2 13Q6 6 12 6L16 2 24 5 30 3 36 7 42 2 50 7 58 8 64 14 60 20Q33 26 6 20z" fill="#d9dadb" />
          <path d="M12 8 20 12 15 17zM38 8 48 12 42 18zM52 10 58 14 54 17z" fill="#54463e" /><path d="M22 10 31 12 26 18z" fill="#5fd0c8" /><path d="M36 14 46 11 43 19z" fill="#5570a8" />
        </svg>
      </div>
    </div>
  );
}

function Foliage() {
  return (
    <svg className="w-[1100px] h-[10px] ml-[1062px] opacity-70" viewBox="0 0 1100 10">
      <filter id="leaf" x="0" y="0" width="100%" height="100%">
        <feTurbulence type="fractalNoise" baseFrequency="0.12" numOctaves="3" seed="4" />
        <feColorMatrix values="0.9 0 0 0 -0.25  0 1.1 0 0 -0.2  0 0.9 0.2 0 -0.2  0 0 0 0 1" />
      </filter>
      <rect width="1100" height="10" filter="url(#leaf)" />
    </svg>
  );
}

export default function App() {
  return (
    <div className="w-[2880px] h-[1800px] overflow-hidden bg-[#030607] bg-[linear-gradient(to_right,#050505_0%,#0a0d0c_30%,#0e1a20_36%,#20393a_38%,#213f45_55%,#1e3d46_75%,#102a24_84%,#040d10_92%,#030a0e_100%)] [font-family:Inter,'Liberation_Sans',sans-serif]">
      <MenuBar />
      <div className="h-[1630px] bg-black rounded-b-[24px]">
        <div className="h-[1630px] rounded-t-[20px] rounded-b-[24px] bg-[#1f2120] border-t-2 border-[#6c6e6e] overflow-hidden">
          <ChromeHeader />
          <WaiterPage />
        </div>
      </div>
      <Dock />
      <Foliage />
    </div>
  );
}
